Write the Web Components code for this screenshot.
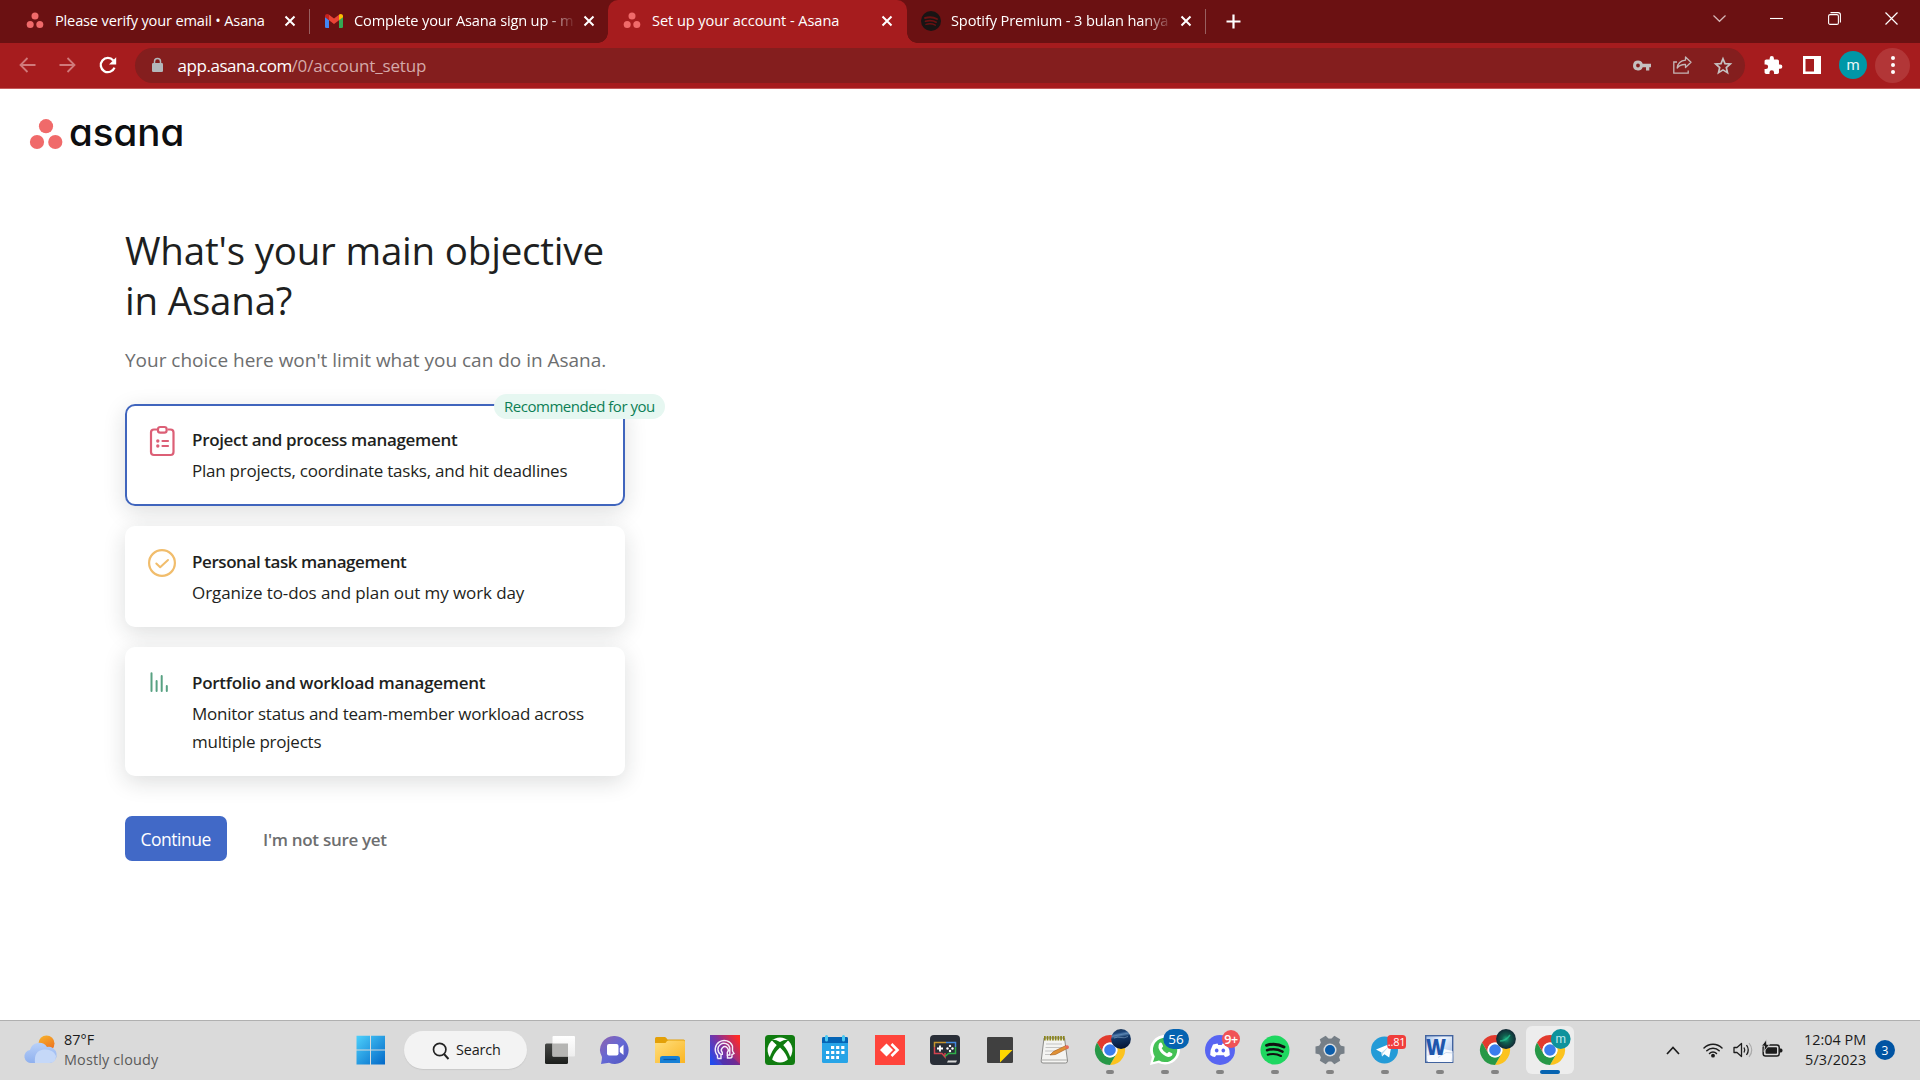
<!DOCTYPE html>
<html lang="en">
<head>
<meta charset="utf-8">
<title>Set up your account - Asana</title>
<style>
html,body{margin:0;height:100%;overflow:hidden;background:#fff}
body{font-family:"Open Sans","Noto Sans",sans-serif;color:#1e1f21}
</style>
</head>
<body>
<desktop-screen></desktop-screen>
<script>
const define=(name,html,setup)=>customElements.define(name,class extends HTMLElement{
  connectedCallback(){
    if(this.shadowRoot)return;
    this.attachShadow({mode:'open'}).innerHTML=typeof html==='function'?html(this):html;
    if(setup)setup(this,this.shadowRoot);
  }
});

/* A single line of text tracked to a given width: <ui-label w="120" size="15"> */
define('ui-label',el=>`<style>
:host{display:block;white-space:nowrap;line-height:1.4;font-size:${el.getAttribute('size')||14}px;width:${el.getAttribute('w')}px;flex:none}
span{display:inline-block}</style><span><slot></slot></span>`,(el,root)=>{
  const s=root.querySelector('span');
  const w=parseFloat(el.getAttribute('w'));
  const n=el.textContent.length;
  s.style.letterSpacing=((w+.3-s.getBoundingClientRect().width)/n)+'px';
});

const chrome=`<path d="M2 7.5A15 15 0 0 1 28 7.5H15A7.5 7.5 0 0 0 8.5 18.75Z" fill="#e23b2e"/><path d="M28 7.5A15 15 0 0 1 15 30L21.5 18.75A7.5 7.5 0 0 0 15 7.5Z" fill="#fcc31e"/><path d="M15 30A15 15 0 0 1 2 7.5L8.5 18.75A7.5 7.5 0 0 0 21.5 18.75Z" fill="#279847"/><circle cx="15" cy="15" r="7.5" fill="#fff"/><circle cx="15" cy="15" r="5.8" fill="#3b7ded"/>`;
const dots=(r,c='#f06a6a')=>`<g fill="${c}"><circle cx="9" cy="4.1" r="${r}"/><circle cx="4.2" cy="12.6" r="${r}"/><circle cx="13.8" cy="12.6" r="${r}"/></g>`;
const X=`<path d="M.5 .5 9.5 9.5M9.5 .5.5 9.5" stroke="#fff" stroke-width="2" fill="none"/>`;
/* name: [width, height, viewBox, markup] */
const ICONS={
  asana:[18,18,'0 0 18 18',dots(3.5)],
  asanaBig:[33,31,'0 0 33 31','<g fill="#f06a6a"><circle cx="16" cy="6.2" r="7.1"/><circle cx="7" cy="22" r="7.100"/><circle cx="25.300" cy="22" r="7.100"/></g>'],
  gmail:[18,14,'0 0 18 14','<path d="M0 2.5V12.7Q0 14 1.3 14H4V6Z" fill="#4285f4"/><path d="M18 2.5V12.7Q18 14 16.7 14H14V6Z" fill="#34a853"/><path d="M14 1.2V6.2L18 3.2V2C18 0 15.6-.7 14 .6Z" fill="#fbbc04"/><path d="M4 1.2V6.2L0 3.2V2C0 0 2.4-.7 4 .6Z" fill="#c5221f"/><path d="M4 .7 9 4.5 14 .7V6.2L9 10 4 6.2Z" fill="#ea4335"/>'],
  spotifyDark:[20,20,'0 0 20 20','<circle cx="10" cy="10" r="10" fill="#191414"/><g fill="none" stroke="#6b1112" stroke-linecap="round"><path d="M4 7Q10.500 5 16 8" stroke-width="1.9"/><path d="M4.500 10.300Q10.500 8.600 15.200 11.200" stroke-width="1.700"/><path d="M5 13.400Q10 12 14.300 14.200" stroke-width="1.500"/></g>'],
  x:[10,10,'0 0 10 10',X],
  plus:[15,15,'0 0 15 15','<path d="M7.500 .5V14.500M.5 7.500H14.500" stroke="#fff" stroke-width="2.200"/>'],
  chev:[13,7,'0 0 13 7','<path d="M.5.5 6.500 6.300 12.500.5" fill="none" stroke="#d6b8b8" stroke-width="1.200"/>'],
  min:[13,13,'0 0 13 13','<path d="M0 6.500H13" stroke="#fff" stroke-width="1.100"/>'],
  restore:[13,13,'0 0 13 13','<rect x=".6" y="2.600" width="9.800" height="9.800" rx="1.500" fill="none" stroke="#fff" stroke-width="1.100"/><path d="M2.500.6H10.200Q12.400.6 12.400 2.800V10.500" fill="none" stroke="#fff" stroke-width="1.100"/>'],
  winx:[13,13,'0 0 13 13','<path d="M.5.5 12.500 12.500M12.500.5.5 12.500" stroke="#fff" stroke-width="1.200"/>'],
  back:[17,16,'0 0 17 16','<path d="M16.500 8H1.500M8.500 1 1.500 8 8.500 15" fill="none" stroke="#d07a7b" stroke-width="1.800"/>'],
  fwd:[17,16,'0 0 17 16','<path d="M.5 8H15.500M8.500 1 15.500 8 8.500 15" fill="none" stroke="#d07a7b" stroke-width="1.800"/>'],
  reload:[18,17,'0 0 18 17','<path d="M14.300 3.500A7.100 7.100 0 1 0 15.500 10.600" fill="none" stroke="#fff" stroke-width="2.300"/><path d="M17.200.3V7.500H10Z" fill="#fff"/>'],
  lock:[11,14,'0 0 11 14','<rect y="5" width="11" height="9" rx="1.300" fill="#b3b7bb"/><path d="M2.500 6V3.600A3 3 0 0 1 8.500 3.600V6" fill="none" stroke="#b3b7bb" stroke-width="1.500"/>'],
  key:[18,11,'0 0 18 11','<path fill-rule="evenodd" fill="#c5c1c1" d="M5 .5A5 5 0 1 0 9.700 7.300H13V10.500H16.300V7.300H18V3.700H9.700A5 5 0 0 0 5 .5ZM5 3.600A1.900 1.900 0 1 1 5 7.400 1.900 1.900 0 0 1 5 3.600Z"/>'],
  share:[19,18,'0 0 19 18','<path d="M4 6H.8V17.200H15.200V14.500" fill="none" stroke="#c5b6b6" stroke-width="1.300"/><path d="M12.500 1 18 6.300 12.500 11.500V8.500C8.500 8.300 6 9.700 4.200 12 4.700 7.800 7.500 4.700 12.500 4.200Z" fill="none" stroke="#c5b6b6" stroke-width="1.300" stroke-linejoin="round"/>'],
  star:[18,17,'0 0 18 17','<path d="M9 1.700 11 6.600 16.300 7 12.300 10.500 13.500 15.700 9 12.900 4.500 15.700 5.700 10.500 1.700 7 7 6.600Z" fill="none" stroke="#c5c1c1" stroke-width="1.700"/>'],
  puzzle:[18,18,'0 0 24 24','<path transform="translate(-1.500 -1) scale(1.130)" d="M20.500 11H19V7c0-1.100-.9-2-2-2h-4V3.500a2.500 2.500 0 0 0-5 0V5H4c-1.100 0-2 .9-2 2v3.800h1.500a2.700 2.700 0 0 1 0 5.400H2V20c0 1.100.9 2 2 2h3.800v-1.500a2.700 2.700 0 0 1 5.400 0V22H17c1.100 0 2-.9 2-2v-4h1.500a2.500 2.500 0 0 0 0-5z" fill="#fff"/>'],
  panel:[18,18,'0 0 18 18','<path fill-rule="evenodd" fill="#fff" d="M0 0H18V18H0ZM2.500 3V15.500H11V3Z"/>'],
  clip:[28,32,'0 0 28 32','<g fill="none" stroke="#dc5f76" stroke-width="2.200"><path d="M9 4.500H6Q3 4.500 3 7.500V27Q3 30 6 30H22.500Q25.500 30 25.500 27V7.500Q25.500 4.500 22.500 4.500H19.500"/><rect x="10" y="2" width="8.600" height="5.600" rx="2.200"/><path d="M14.500 16H20M14.500 21H20" stroke-linecap="round"/></g><circle cx="9.800" cy="16" r="1.700" fill="#dc5f76"/><circle cx="9.800" cy="21" r="1.700" fill="#dc5f76"/>'],
  check:[28,28,'0 0 28 28','<g fill="none" stroke="#f1bd6c" stroke-width="2.200"><circle cx="14" cy="14" r="12.900"/><path d="M8.300 14.500 12.200 18.300 20 11" stroke-linecap="round" stroke-linejoin="round" stroke-width="2"/></g>'],
  bars:[20,20,'0 0 20 20','<g stroke="#58a182" stroke-width="2" stroke-linecap="round"><path d="M2.500 1.200V19M7.600 9V19M12.700 4V19M17.800 14V19"/></g>'],
  weather:[32,28,'0 0 32 28','<defs><linearGradient id="s" x2=".5" y2="1"><stop stop-color="#f7b52c"/><stop offset="1" stop-color="#ee7420"/></linearGradient><linearGradient id="c" x2="0" y2="1"><stop stop-color="#b8d0f8"/><stop offset="1" stop-color="#8fb0ee"/></linearGradient></defs><circle cx="21.500" cy="7.500" r="8" fill="url(#s)"/><path d="M7 27A6.500 6.500 0 0 1 5 14 9.500 9.500 0 0 1 22 11 7 7 0 0 1 25 27Z" fill="url(#c)"/><path d="M10 27Q8.500 14.500 19 13.500 28.500 13 31 20 31 27 24.500 27Z" fill="#c5d8f8"/>'],
  win:[30,30,'0 0 30 30','<defs><linearGradient id="w" x2="1" y2="1"><stop stop-color="#4dd0fb"/><stop offset="1" stop-color="#0268c8"/></linearGradient></defs><path fill="url(#w)" d="M.5 .8H14V14.500H.5ZM15 .8H29V14.500H15ZM.5 15.500H14V29.500H.5ZM15 15.500H29V29.500H15Z"/>'],
  mag:[18,18,'0 0 18 18','<circle cx="7.700" cy="7.500" r="6.200" fill="none" stroke="#222" stroke-width="1.700"/><path d="M12 12 16.500 17" stroke="#222" stroke-width="1.900"/>'],
  taskview:[30,30,'0 0 30 30','<defs><linearGradient id="t" x2="0" y2="1"><stop stop-color="#464846"/><stop offset="1" stop-color="#1c1e1c"/></linearGradient><linearGradient id="tv" x2="0" y2="1"><stop stop-color="#fff"/><stop offset="1" stop-color="#eee"/></linearGradient></defs><rect x="0" y="8.500" width="23" height="20.500" rx="1.500" fill="url(#t)"/><rect x="7.500" y="1" width="22.500" height="20.500" rx="1" fill="url(#tv)"/><path d="M7.500 8.500H23V21.500H7.500Z" fill="#b5b5b3"/>'],
  chat:[30,30,'0 0 30 30','<defs><linearGradient id="h" x2="1" y2="1"><stop stop-color="#9163ad"/><stop offset=".5" stop-color="#6468d5"/><stop offset="1" stop-color="#5055bd"/></linearGradient></defs><path d="M15 1A14 14 0 1 1 9 27.800L1 29Q2 24.500 2 22A14 14 0 0 1 15 1Z" fill="url(#h)"/><rect x="7" y="9" width="11.500" height="11.500" rx="2" fill="#fff"/><path d="M19.800 13 23.500 9.800V20L19.800 17Z" fill="#fff"/>'],
  folder:[30,30,'0 0 30 30','<defs><linearGradient id="f" x2="1" y2="1"><stop stop-color="#ffdf7e"/><stop offset="1" stop-color="#fbb522"/></linearGradient></defs><path d="M0 3.500Q0 2 1.500 2H10Q11 2 12.500 4.500H28.500Q30 4.500 30 6V12H0Z" fill="#e3a008"/><path d="M0 8H10.500Q12 5.600 13.500 5.600H28.500Q30 5.600 30 7V28H0Z" fill="url(#f)"/><path d="M5 28V23Q5 21 7.500 21H22.500Q25 21 25 23V28Z" fill="#1780d5"/><path d="M8.500 24.500H21.500" stroke="#0b57a4" stroke-width="1.200"/>'],
  head:[30,30,'0 0 30 30','<defs><linearGradient id="d" x1="0" y1=".8" x2="1" y2=".2"><stop stop-color="#224bec"/><stop offset=".5" stop-color="#853099"/><stop offset="1" stop-color="#ff2a26"/></linearGradient></defs><path d="M0 0H30V30H0Z" fill="url(#d)"/><path d="M8 24 22 22 30 29V30H13Z" fill="#4a279c" opacity=".5"/><g fill="none" stroke="#f3eefa" stroke-width="1.400"><path d="M7.500 23.500V20.500A9 9 0 1 1 22.500 11V16L24 18.500 22 19.500V21.500Q22 23 20 23H17.500V20"/><path d="M7.500 23.500H11V19.500A6 6 0 1 1 19.800 13V20H17.300V17.500A3.400 3.400 0 1 0 12.300 17.500V20"/></g>'],
  xbox:[30,30,'0 0 30 30','<rect width="30" height="30" rx="3.500" fill="#107c10"/><circle cx="15" cy="15" r="12.400" fill="#fff"/><g fill="#107c10"><path d="M6.500 5Q10 4 15 7 20 4 23.500 5L21.300 7.300 15 12 8.700 7.300Z"/><path d="M8.700 7.300 11.800 10Q6.300 16 4.600 23.200L6.800 25.600Q8.500 18.500 15 12.500V10Z"/><path d="M21.300 7.300 18.200 10Q23.700 16 25.400 23.200L23.200 25.600Q21.500 18.500 15 12.500V10Z"/></g>'],
  cal:[30,30,'0 0 30 30','<rect x="2" y="2" width="26" height="26" rx="1.500" fill="#27a4e7"/><path d="M2 8V3.500Q2 2 3.500 2H26.500Q28 2 28 3.500V8Z" fill="#0564b5"/><path d="M6.500 1.500V5M23.500 1.500V5" stroke="#49c8f2" stroke-width="3" stroke-linecap="round"/><path d="M11 12.500H24.500M6 17.500H24.500M6 22.500H19" stroke="#fff" stroke-width="3.200" stroke-dasharray="3.200 1.900"/>'],
  any:[30,30,'0 0 30 30','<path d="M0 0H30V30H0Z" fill="#ff443b"/><path d="M11.500 8.500 18 15 11.500 21.500 5 15Z" fill="#fff"/><path d="M16.500 9 22.500 15 16.500 21" fill="none" stroke="#fff" stroke-width="2.600"/>'],
  game:[30,30,'0 0 30 30','<rect width="30" height="30" rx="4" fill="#292e37"/><path d="M4.500 12V7.500H16" fill="none" stroke="#c6952f" stroke-width="1.500"/><path d="M16 7.500H25.500V12" fill="none" stroke="#438ae0" stroke-width="1.500"/><path d="M4.500 12V18.500H12L15 22V18" fill="none" stroke="#d4434f" stroke-width="1.500"/><path d="M15 21.500 18.500 18.500H25.500V12" fill="none" stroke="#2fae49" stroke-width="1.500"/><path d="M10 10.500V16.500M7 13.500H13" stroke="#fff" stroke-width="1.800"/><g fill="#fff"><circle cx="20" cy="10.900" r="1.200"/><circle cx="20" cy="16" r="1.200"/><circle cx="17.500" cy="13.500" r="1.200"/><circle cx="22.500" cy="13.500" r="1.200"/></g><path d="M17 27.500 18 25.500H27L26 27.500Z" fill="#d8d8d8"/>'],
  sticky:[30,30,'0 0 30 30','<rect x="2" y="2" width="26" height="26" rx="1.300" fill="#404040"/><path d="M15 15H27.500L15 27.500Z" fill="#ffd800"/>'],
  note:[30,30,'0 0 30 30','<path d="M4 3H24.500L27.500 26Q27.500 28 25.500 28H3Q1 28 1.200 26Z" fill="#f4f4f2" stroke="#8c8c8a" stroke-width="1"/><path d="M1.500 25H27" stroke="#b7b7b5" stroke-width="1.200"/><path d="M4 3.200H25" stroke="#8a841c" stroke-width="4.500" stroke-dasharray="1.700 1"/><path d="M6 9H22M5.500 12.500H22.500M5.200 16H17M5 19.500H12" stroke="#c4c4c4" stroke-width="1.100"/><path d="M10 20 13.500 16.500 26 10.500 28 13 15.500 19.500Z" fill="#e09134" stroke="#a35b1b" stroke-width=".6"/><path d="M24.500 11.200 27 10.200Q29.500 10.500 28.800 13.200L27 14.300Z" fill="#e76a5a"/>'],
  chrome1:[30,30,'0 0 30 30',chrome+'<defs><linearGradient id="e" x2=".2" y2="1"><stop stop-color="#20364e"/><stop offset=".25" stop-color="#1b4378"/><stop offset=".36" stop-color="#5a85b2"/><stop offset=".5" stop-color="#123767"/><stop offset="1" stop-color="#061738"/></linearGradient></defs><circle cx="26" cy="4" r="9.900" fill="url(#e)"/><path d="M19 3Q23 1.500 26 2.500T33 1.500" stroke="#8fb0d0" stroke-width=".7" fill="none" opacity=".8"/>'],
  whats:[30,30,'0 0 30 30','<path d="M0 30 2 22A15 14.800 0 1 1 8.500 28Z" fill="#fff"/><path d="M3 27 4.800 21.500A12.200 12.200 0 1 1 9 25.500Z" fill="#43c154"/><path d="M9.500 8Q11 7 12 8.500L13.200 11.200 11.700 13.200Q13.500 17 17 18.500L19 16.700 22 18.200Q23 18.800 22 20.500 19.500 23 15.500 21 10.500 18.500 8.500 13 8 10 9.500 8Z" fill="#fff"/><rect x="13.300" y="-6" width="25.700" height="20" rx="10" fill="#0563b1"/><text x="26.100" y="9" fill="#fff" font-size="13.500" text-anchor="middle">56</text>'],
  discord:[30,30,'0 0 30 30','<circle cx="15" cy="15" r="15" fill="#5865f2"/><path d="M8 9.500 12.500 8.500 13.300 10H16.700L17.500 8.500 22 9.500Q25 14.500 24.800 20 22.500 21.800 20 22L18.900 20.300H11.100L10 22Q7.500 21.800 5.200 20 5 14.500 8 9.500Z" fill="#fff"/><ellipse cx="11.700" cy="15.500" rx="1.800" ry="2.100" fill="#5865f2"/><ellipse cx="18.300" cy="15.500" rx="1.800" ry="2.100" fill="#5865f2"/><circle cx="26" cy="4" r="9" fill="#f05356"/><text x="26" y="8.800" fill="#fff" font-size="12.500" text-anchor="middle" font-weight="600" letter-spacing="-.5">9+</text>'],
  spotify:[30,30,'0 0 30 30','<circle cx="15" cy="15" r="14.500" fill="#1ed760"/><g fill="none" stroke="#111" stroke-linecap="round"><path d="M6.500 10.300Q16 7.500 24 12" stroke-width="2.900"/><path d="M7 15.200Q15.500 12.800 22.500 16.600" stroke-width="2.500"/><path d="M7.700 19.800Q15 17.800 21 21" stroke-width="2"/></g>'],
  gear:[30,30,'0 0 30 30','<g fill="#767f87"><circle cx="15" cy="15" r="11.500"/>'+[30,90,150,210,270,330].map(a=>`<path d="M10.500 5 11.600.5H18.400L19.500 5Z" transform="rotate(${a} 15 15)"/>`).join('')+'</g><circle cx="15" cy="15" r="6.500" fill="#d9dde0"/><circle cx="15" cy="15" r="5" fill="#0c5eab"/>'],
  telegram:[30,30,'0 0 30 30','<circle cx="14.500" cy="15" r="13.500" fill="#249bd7"/><path d="M6 14.500 22 8 19.200 22.500 14.500 19.200 12 21.500 11.500 17.500Z" fill="#fff"/><path d="M11.500 17.500 19 11.200 13 18.300 12 21.500Z" fill="#b6d9ee"/><rect x="17.300" y="0" width="18.700" height="14" rx="3.500" fill="#f03e3c"/><text x="26.600" y="11" fill="#fff" font-size="11" text-anchor="middle" letter-spacing="-.2">..81</text>'],
  word:[30,30,'0 0 30 30','<defs><linearGradient id="o" x2="1" y2="1"><stop stop-color="#9fbce6"/><stop offset=".35" stop-color="#eef4fd"/><stop offset="1" stop-color="#9db9e4"/></linearGradient></defs><rect x=".7" y=".7" width="27" height="26.600" fill="url(#o)" stroke="#41639f" stroke-width="1.400"/><path d="M3 27 2 21 12 19 19 14 27.500 16V27Z" fill="#f9fbff"/><path d="M13 22.500 21 17.500 28 18 27 26" fill="none" stroke="#b9cbe6" stroke-width=".7"/><text x="1" y="20" font-size="22" font-weight="800" fill="#1f56ac" textLength="20" lengthAdjust="spacingAndGlyphs">W</text>'],
  chrome2:[30,30,'0 0 30 30',chrome+'<defs><radialGradient id="n"><stop stop-color="#1ca77e"/><stop offset=".4" stop-color="#10604f"/><stop offset="1" stop-color="#112834"/></radialGradient></defs><circle cx="26" cy="4" r="9.900" fill="url(#n)"/><path d="M20 6Q26 6 30 0" stroke="#2ac894" stroke-width="1.500" fill="none" opacity=".7"/>'],
  chrome3:[30,30,'0 0 30 30',chrome+'<circle cx="25.700" cy="4" r="9.900" fill="#0e929c"/><text x="25.700" y="8" fill="#bfe9ee" font-size="12" text-anchor="middle" font-family="Roboto">m</text>'],
  up:[14,9,'0 0 14 9','<path d="M1 8 7 1.500 13 8" fill="none" stroke="#1c1c1c" stroke-width="1.700"/>'],
  wifi:[20,16,'0 0 20 16','<g fill="none" stroke="#1c1c1c" stroke-width="1.500" stroke-linecap="round"><path d="M1 6A12.500 12.500 0 0 1 19 6M3.800 8.800A8.600 8.600 0 0 1 16.200 8.800M6.500 11.500A4.800 4.800 0 0 1 13.500 11.500"/></g><circle cx="10" cy="13.700" r="1.900" fill="#1c1c1c"/>'],
  vol:[20,16,'0 0 20 16','<path d="M1 5.500H4L8.500 1.500V14.500L4 10.500H1Z" fill="none" stroke="#1c1c1c" stroke-width="1.300" stroke-linejoin="round"/><path d="M11 5.500Q12.500 8 11 10.500M13.500 3Q17 8 13.500 13" fill="none" stroke="#1c1c1c" stroke-width="1.300"/><path d="M16 1Q21.500 8 16 15" fill="none" stroke="#aaa" stroke-width="1.200"/>'],
  batt:[21,17,'0 0 21 17','<rect x="1.200" y="5" width="16" height="11" rx="2.300" fill="none" stroke="#1c1c1c" stroke-width="1.500"/><rect x="3.500" y="7.200" width="11.500" height="6.600" rx=".8" fill="#1c1c1c"/><path d="M18 8.500H19Q20.500 8.500 20.500 10.500T19 12.500H18Z" fill="#1c1c1c"/><path d="M4.500 -.5 -.5 6H2.500L2 11.500 7.500 4.500H4.700Z" fill="#1c1c1c" stroke="#dadada" stroke-width=".8"/>']
};
define('ui-icon',el=>{const [w,h,v,m]=ICONS[el.getAttribute('name')];
  return `<style>:host{display:block;flex:none;width:${w}px;height:${h}px}svg{display:block;overflow:visible}</style><svg width="${w}" height="${h}" viewBox="${v}">${m}</svg>`});

define('browser-tab',el=>`<style>
:host{display:flex;align-items:center;width:299px;height:43px;box-sizing:border-box;padding:0 14px 1px 14px;color:#fff;flex:none;position:relative}
:host([sep])::after{content:"";position:absolute;right:0;top:9px;width:1px;height:25px;background:#986060}
:host([active]){background:#a61c1e;border-radius:10px 10px 0 0}
:host([active])::before,:host([active])::after{content:"";position:absolute;bottom:0;width:10px;height:10px}
:host([active])::before{left:-10px;background:radial-gradient(circle at 0 0,#6b1112 9.5px,#a61c1e 10px)}
:host([active])::after{right:-10px;background:radial-gradient(circle at 100% 0,#6b1112 9.5px,#a61c1e 10px)}
.i{width:20px;display:flex;justify-content:center;margin-right:10px}
.t{width:219px;overflow:hidden;margin-top:-1px}
:host([fade]) .t{-webkit-mask-image:linear-gradient(90deg,#000 192px,transparent 222px)}
.x{margin-left:11px}
</style><div class="i"><ui-icon name="${el.getAttribute('icon')}"></ui-icon></div><div class="t"><slot></slot></div><ui-icon class="x" name="x"></ui-icon>`);

define('tab-strip',`<style>:host{display:flex;align-items:center;height:43px;background:#6b1112;padding-left:11px;position:relative}
.new{margin-left:20px}.win{display:flex;align-items:center;margin-left:auto;margin-right:22px;padding-bottom:6px;gap:44.500px}
.win ui-icon:first-child{margin-right:-.5px}</style>
<browser-tab icon="asana" sep><ui-label w="209.5" size="14.6">Please verify your email • Asana</ui-label></browser-tab>
<browser-tab icon="gmail" fade style="width:298px"><ui-label w="219" size="14.6">Complete your Asana sign up - m</ui-label></browser-tab>
<browser-tab icon="asana" active><ui-label w="187" size="14.6">Set up your account - Asana</ui-label></browser-tab>
<browser-tab icon="spotifyDark" sep fade><ui-label w="217" size="14.6">Spotify Premium - 3 bulan hanya</ui-label></browser-tab>
<ui-icon class="new" name="plus"></ui-icon>
<div class="win"><ui-icon name="chev"></ui-icon><ui-icon name="min"></ui-icon><ui-icon name="restore"></ui-icon><ui-icon name="winx"></ui-icon></div>`);

define('address-bar',`<style>
:host{display:flex;align-items:center;height:46px;box-sizing:border-box;background:#a61c1e;border-bottom:1px solid #c55a5b;padding:0 10px 1px 19px}
.nav{display:flex;align-items:center;gap:23px;width:116px}
.box{display:flex;align-items:center;background:#841e1e;height:35px;border-radius:18px;width:1610px;box-sizing:border-box;padding:0 13.500px 0 17px}
.url{display:flex;margin-left:14.500px;color:#fff;padding-top:1px}.url .p{color:#d5a9a9}
.acts{display:flex;align-items:center;gap:22px;margin-left:auto}
.ext{display:flex;align-items:center;margin-left:18.500px}
.av{width:28px;height:28px;border-radius:50%;background:#0097a7;color:#e8f6f7;display:flex;justify-content:center;align-items:center;font:15px Roboto;margin:0 8px 0 18px}
.menu{width:35px;height:35px;border-radius:50%;background:#b23637;display:flex;flex-direction:column;align-items:center;justify-content:center;gap:3px}
.menu i{width:4px;height:4px;border-radius:50%;background:#fff}
</style>
<div class="nav"><ui-icon name="back"></ui-icon><ui-icon name="fwd"></ui-icon><ui-icon name="reload"></ui-icon></div>
<div class="box"><ui-icon name="lock"></ui-icon><div class="url"><ui-label w="114" size="17">app.asana.com</ui-label><ui-label class="p" w="134.5" size="17">/0/account_setup</ui-label></div>
<div class="acts"><ui-icon name="key"></ui-icon><ui-icon name="share"></ui-icon><ui-icon name="star"></ui-icon></div></div>
<div class="ext"><ui-icon name="puzzle"></ui-icon><ui-icon name="panel" style="margin-left:21.500px"></ui-icon><div class="av">m</div><div class="menu"><i></i><i></i><i></i></div></div>`);

define('choice-card',el=>`<style>
:host{display:flex;width:500px;box-sizing:border-box;background:#fff;border-radius:10px;padding:22px 20px;position:relative;box-shadow:0 6px 22px rgba(30,31,33,.15)}
:host([selected]){box-shadow:0 6px 22px rgba(30,31,33,.15),inset 0 0 0 2px #4065bd}
.i{width:47px;display:flex}
.b{display:flex;flex-direction:column}
::slotted([slot=title]){font-weight:600;line-height:28px;margin-bottom:3px}
::slotted(.d){line-height:28px}
.tag{position:absolute;left:369px;top:-10px;height:25px;width:171px;box-sizing:border-box;border-radius:13px;background:#e6f7f1;color:#0d7f56;display:flex;align-items:center;padding-left:10px}
</style><div class="i"><slot name="icon"></slot></div><div class="b"><slot name="title"></slot><slot></slot></div>
${el.hasAttribute('selected')?'<div class="tag"><ui-label w="150.500" size="15">Recommended for you</ui-label></div>':''}`);

define('setup-page',`<style>
:host{display:flex;flex-direction:column;height:931px;background:#fff}
.logo{display:flex;align-items:flex-start;padding:31px 0 0 30px;height:61px;box-sizing:border-box}
.logo ui-label{font-family:Inter,sans-serif;font-feature-settings:"cv11";font-weight:500;color:#0d0e10;line-height:48px;margin:-12px 0 0 6px}
main{display:flex;flex-direction:column;padding:75px 0 0 125px;width:560px}
h1{margin:0;font-weight:400;display:flex;flex-direction:column}
h1 ui-label{line-height:50px}
.sub{color:#6d6e6f;line-height:28px;margin-top:21px}
.cards{display:flex;flex-direction:column;gap:20px;margin-top:30px}
.act{display:flex;align-items:center;margin-top:40px;gap:36px}
button{all:unset;box-sizing:border-box;width:102px;height:45px;border-radius:7px;background:#4169c7;color:#fff;display:flex;align-items:center;padding-left:15.500px}
.skip{font-weight:600;color:#6d6e6f}
.act ui-label{padding-top:2px}
</style>
<div class="logo"><ui-icon name="asanaBig"></ui-icon><ui-label w="115" size="38.500">asana</ui-label></div>
<main>
<h1><ui-label w="478.500" size="38.500">What's your main objective</ui-label><ui-label w="167" size="38.500">in Asana?</ui-label></h1>
<ui-label class="sub" w="481" size="19">Your choice here won't limit what you can do in Asana.</ui-label>
<div class="cards">
<choice-card selected style="height:102px"><ui-icon slot="icon" name="clip" style="margin:-1px 0 0 3px"></ui-icon><ui-label slot="title" w="265" size="17">Project and process management</ui-label><ui-label class="d" w="375" size="17">Plan projects, coordinate tasks, and hit deadlines</ui-label></choice-card>
<choice-card style="height:101px"><ui-icon slot="icon" name="check" style="margin:1px 0 0 3px"></ui-icon><ui-label slot="title" w="214" size="17">Personal task management</ui-label><ui-label class="d" w="332" size="17">Organize to-dos and plan out my work day</ui-label></choice-card>
<choice-card style="height:129px"><ui-icon slot="icon" name="bars" style="margin:3px 0 0 4px"></ui-icon><ui-label slot="title" w="293" size="17">Portfolio and workload management</ui-label><ui-label class="d" w="391.500" size="17">Monitor status and team-member workload across</ui-label><ui-label class="d" w="129" size="17">multiple projects</ui-label></choice-card>
</div>
<div class="act"><button><ui-label w="70" size="17.500">Continue</ui-label></button><ui-label class="skip" w="123.500" size="17">I'm not sure yet</ui-label></div>
</main>`);

define('task-app',el=>`<style>:host{display:flex;flex-direction:column;align-items:center;justify-content:center;width:55px;height:60px;flex:none;position:relative;font-family:"Open Sans",sans-serif}
.s{width:48px;height:48px;display:flex;align-items:center;justify-content:center;border-radius:6px}
:host([active]) .s{background:#ededed}
:host([run])::after,:host([active])::after{content:"";position:absolute;bottom:6px;height:4px;width:8px;border-radius:2px;background:#838383}
:host([active])::after{width:20px;background:#0563b1}</style><div class="s"><ui-icon name="${el.getAttribute('icon')}"></ui-icon></div>`);

define('task-bar',`<style>
:host{display:flex;align-items:center;height:60px;box-sizing:border-box;background:#dadada;box-shadow:inset 0 1px #b0b0b0;color:#1b1b1b}
.wx{display:flex;align-items:center;padding-left:25px;width:331px;box-sizing:content-box;gap:7px}
.two{display:flex;flex-direction:column;margin-top:-1px}.two ui-label{line-height:20px}
.pill{display:flex;align-items:center;width:123px;height:38px;border-radius:19px;background:#f3f3f3;box-sizing:border-box;padding:1px 0 0 28px;gap:6px;margin:0 5px 0 18px;box-shadow:0 1px 1px #c8c8c8}
.tray{display:flex;align-items:center;margin-left:auto;padding-right:25px}
.n{width:20px;height:20px;border-radius:50%;background:#0054a3;color:#fff;font-size:12px;display:flex;align-items:center;justify-content:center;margin-left:9px}
</style>
<div class="wx"><ui-icon name="weather"></ui-icon><div class="two"><ui-label w="30" size="14.400">87°F</ui-label><ui-label w="94" size="14.400" style="color:#5a5a5a">Mostly cloudy</ui-label></div></div>
<ui-icon name="win"></ui-icon>
<div class="pill"><ui-icon name="mag"></ui-icon><ui-label w="44.500" size="14.400">Search</ui-label></div>
<task-app icon="taskview"></task-app><task-app icon="chat"></task-app><task-app icon="folder"></task-app><task-app icon="head"></task-app><task-app icon="xbox"></task-app><task-app icon="cal"></task-app><task-app icon="any"></task-app><task-app icon="game"></task-app><task-app icon="sticky"></task-app><task-app icon="note"></task-app><task-app icon="chrome1" run></task-app><task-app icon="whats" run></task-app><task-app icon="discord" run></task-app><task-app icon="spotify" run></task-app><task-app icon="gear" run></task-app><task-app icon="telegram" run></task-app><task-app icon="word" run></task-app><task-app icon="chrome2" run></task-app><task-app icon="chrome3" active></task-app>
<div class="tray"><ui-icon name="up"></ui-icon><ui-icon name="wifi" style="margin-left:23px"></ui-icon><ui-icon name="vol" style="margin-left:10px"></ui-icon><ui-icon name="batt" style="margin:-3px 21px 0 9px"></ui-icon>
<div class="two"><ui-label w="62" size="14.400">12:04 PM</ui-label><ui-label w="61" size="14.400" style="margin-left:1px">5/3/2023</ui-label></div><div class="n">3</div></div>`);

define('desktop-screen',`<style>:host{display:flex;flex-direction:column;width:1920px;height:1080px}</style>
<tab-strip></tab-strip><address-bar></address-bar><setup-page></setup-page><task-bar></task-bar>`);
</script>
</body>
</html>
